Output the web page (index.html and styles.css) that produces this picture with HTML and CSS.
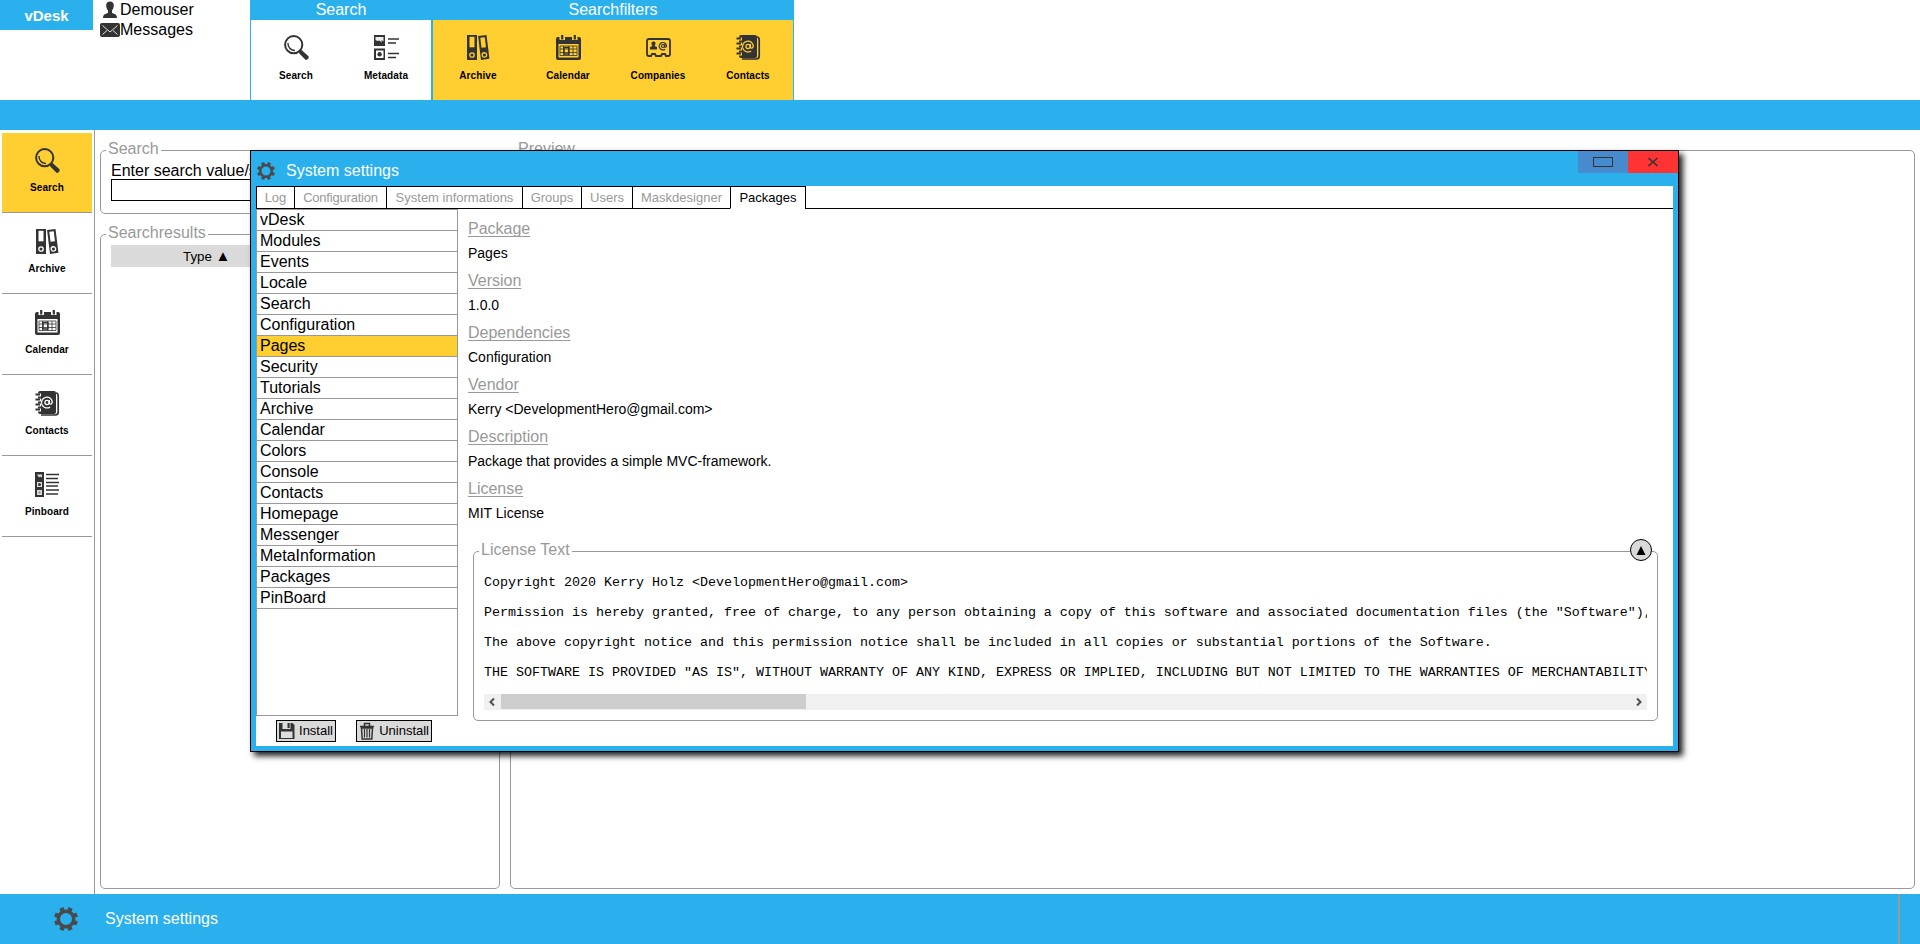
FILE: index.html
```html
<!DOCTYPE html>
<html lang="en">
<head>
<meta charset="utf-8">
<title>vDesk</title>
<link rel="stylesheet" href="styles.css">
</head>
<body>
<svg width="0" height="0" class="defs">
  <symbol id="i-search" viewBox="0 0 25 25">
    <circle cx="9.700" cy="9.700" r="8.600" fill="none" stroke="#333" stroke-width="2"/>
    <path d="M3.900 8c0 5 3.500 7.500 7 7.500" fill="none" stroke="#333" stroke-width="1.400"/>
    <path d="M14.500 16.500l2.500-2 7.500 6.700c1 1.500-1.500 4.500-3 3.500l-6-6z" fill="#333"/>
  </symbol>
  <symbol id="i-meta" viewBox="0 0 25 25">
    <path d="M0 0h11v11H0zM0 13.500h11V25H0z" fill="#333"/>
    <path d="M1.500 2h8v4.500L7.500 5v2.500l-2-2-2 .5-2-1z" fill="#eee"/>
    <path d="M2 15.500h7.500V23H2z" fill="#fff"/><circle cx="5.600" cy="19.300" r="2.200" fill="#333"/>
    <path d="M14 4h11M14 8h8M14 18.500h11M14 22.500h8" stroke="#333" stroke-width="1.700"/>
  </symbol>
  <symbol id="i-archive" viewBox="0 0 25 25">
    <path d="M1 0h10v25H1z" fill="#333"/>
    <path class="cut" d="M3.500 1.800h5v10.500h-5z"/>
    <circle class="cut-line" cx="6" cy="20" r="2.200"/>
    <g transform="rotate(-7 17.500 12.500)">
      <path d="M13.500 .5h8.500v24h-8.500z" fill="#333"/>
      <path class="cut" d="M15.500 2.500h4.500v10h-4.500z"/>
      <circle class="cut-line" cx="17.500" cy="20" r="2.200"/>
    </g>
  </symbol>
  <symbol id="i-calendar" viewBox="0 0 25 25">
    <path d="M0 4q0-2 2-2h21q2 0 2 2v19q0 2-2 2H2q-2 0-2-2z" fill="#333"/>
    <path class="cut" d="M2.500 9h20v13.500h-20zM3.500 0h5.500v5H3.500zM16 0h5.500v5H16z"/>
    <path d="M6.200 0v4.500M18.800 0v4.500" stroke="#333" stroke-width="2.200"/>
    <path d="M4 11h17v9.500H4zM4 14h17M4 17.500h17M7.500 11v9.500M12.500 11v9.500M17 11v9.500" fill="none" stroke="#333" stroke-width=".8"/>
    <path d="M8 12.500h5v6.500H8z" fill="none" stroke="#333" stroke-width="1.500"/>
  </symbol>
  <symbol id="i-company" viewBox="0 0 25 25">
    <path d="M3 4h19q2 0 2 2v13q0 2-2 2h-2l-1-2h-3l-1 2h-5l-1-2H6l-1 2H3q-2 0-2-2V6q0-2 2-2z" fill="none" stroke="#333" stroke-width="1.800"/>
    <path d="M7.500 6.500c3 0 2 3 1 4.500l2.500 1v2.500H4V12l2.500-1c-1-1.500-2-4.500 1-4.500z" fill="#333"/>
    <g fill="none" stroke="#333" stroke-width="1.200"><circle cx="17" cy="11" r="1.500"/><path d="M18.700 9v2.800q1 1.200 1.900-.8a3.700 3.700 0 1 0-1.500 3.200"/></g>
  </symbol>
  <symbol id="i-contacts" viewBox="0 0 25 25">
    <path d="M5 0h14q2 0 2 2v19q0 2-2 2H5q-2 0-2-2V2q0-2 2-2z" fill="#333"/>
    <path d="M21 2q2.200 0 2.200 3v16q0 3-3 3H6" fill="none" stroke="#333" stroke-width="1.700"/>
    <path d="M1 4h5M1 9h5M1 14h5M1 19h5" class="cut-line wide"/>
    <path d="M.5 3.500h4.500M.5 8.500h4.500M.5 13.500h4.500M.5 18.500h4.500" stroke="#333" stroke-width="1.800"/>
    <circle class="cut-line" cx="12" cy="11.500" r="2.100"/>
    <path class="cut-line" d="M14.400 9v3.600q1.700 1.600 2.900-1.100a5.400 5.400 0 1 0-2.200 4.400"/>
  </symbol>
  <symbol id="i-pin" viewBox="0 0 25 25">
    <path d="M0 0h9v25H0z" fill="#333"/><path d="M2 2.500h5v3L5 4.500 4 5.500zM2 10h5v5H2zM2 18h5v5H2z" fill="#ddd"/>
    <circle cx="4.500" cy="12.500" r="1.500" fill="#333"/><circle cx="4.500" cy="20.500" r="1.200" fill="#999"/>
    <path d="M11 2.500h13M11 6.500h12M11 10.500h13M11 14h12M11 18h13M11 22h12" stroke="#333" stroke-width="1.500"/>
  </symbol>
  <symbol id="i-gear" viewBox="0 0 24 24">
    <circle cx="12" cy="12" r="7.700" fill="none" stroke="#4a4a4a" stroke-width="3.400"/>
    <g stroke="#4a4a4a" stroke-width="4.400"><path d="M12 0v4M12 20v4M0 12h4M20 12h4" transform="rotate(22.500 12 12)"/><path d="M12 0v4M12 20v4M0 12h4M20 12h4" transform="rotate(67.500 12 12)"/></g>
  </symbol>
</svg>

<header class="top">
  <div class="brand">vDesk</div>
  <div class="user">
    <div class="user-row"><svg class="user-icon" viewBox="0 0 20 20"><path d="M10 1.500c5 0 4.500 6 2 9v2.500c2 .8 5 1 5 5H3c0-4 3-4.200 5-5v-2.500c-2.500-3-3-9 2-9z" fill="#333"/></svg>Demouser</div>
    <div class="user-row"><svg class="user-icon" viewBox="0 0 20 20"><rect y="3" width="20" height="14" rx="2" fill="#333"/><path d="M2.500 5.500L10 12l7.500-6.500M2.500 14.500L7 10.500M17.500 14.500L13 10.500" fill="none" stroke="#ddd"/></svg>Messages</div>
  </div>
  <section class="group">
    <h2 class="group-title">Search</h2>
    <div class="group-items">
      <div class="tool"><svg class="icon"><use href="#i-search"/></svg>Search</div>
      <div class="tool"><svg class="icon"><use href="#i-meta"/></svg>Metadata</div>
    </div>
  </section>
  <section class="group group-active">
    <h2 class="group-title">Searchfilters</h2>
    <div class="group-items">
      <div class="tool"><svg class="icon"><use href="#i-archive"/></svg>Archive</div>
      <div class="tool"><svg class="icon"><use href="#i-calendar"/></svg>Calendar</div>
      <div class="tool"><svg class="icon"><use href="#i-company"/></svg>Companies</div>
      <div class="tool"><svg class="icon"><use href="#i-contacts"/></svg>Contacts</div>
    </div>
  </section>
</header>
<div class="bar"></div>
<main class="main">
  <nav class="side">
    <div class="side-item selected"><svg class="icon"><use href="#i-search"/></svg>Search</div>
    <div class="side-item"><svg class="icon"><use href="#i-archive"/></svg>Archive</div>
    <div class="side-item"><svg class="icon"><use href="#i-calendar"/></svg>Calendar</div>
    <div class="side-item"><svg class="icon"><use href="#i-contacts"/></svg>Contacts</div>
    <div class="side-item"><svg class="icon"><use href="#i-pin"/></svg>Pinboard</div>
  </nav>
  <div class="left">
    <fieldset class="box search-box">
      <legend class="legend">Search</legend>
      <div class="search-label">Enter search value/s</div>
      <div class="search-input"></div>
    </fieldset>
    <fieldset class="box results-box">
      <legend class="legend">Searchresults</legend>
      <div class="results-head">Type <span class="sort">▲</span></div>
    </fieldset>
  </div>
  <fieldset class="box preview"><legend class="legend">Preview</legend></fieldset>
</main>
<footer class="task">
  <svg class="task-gear"><use href="#i-gear"/></svg>
  <span class="task-name">System settings</span>
  <span class="task-end"></span>
</footer>

<div class="window">
  <div class="win-head">
    <svg class="win-gear"><use href="#i-gear"/></svg>
    <span class="win-title">System settings</span>
    <span class="win-btn"><svg width="20" height="10"><rect x=".5" y=".5" width="19" height="9" fill="none" stroke="#333"/></svg></span>
    <span class="win-btn win-close"><svg width="12" height="10"><path d="M1.500 1l9 8M10.500 1l-9 8" stroke="#333" stroke-width="1.600"/></svg></span>
  </div>
  <div class="win-body">
    <div class="tabs">
      <span class="tab t-log">Log</span><span class="tab t-conf">Configuration</span><span class="tab t-sys">System informations</span><span class="tab t-grp">Groups</span><span class="tab t-usr">Users</span><span class="tab t-mask">Maskdesigner</span><span class="tab t-pkg">Packages</span><span class="tab-rest"></span>
    </div>
    <div class="content">
      <div class="packages">
        <div class="list">
          <div class="row">vDesk</div><div class="row">Modules</div><div class="row">Events</div><div class="row">Locale</div><div class="row">Search</div><div class="row">Configuration</div><div class="row row-on">Pages</div><div class="row">Security</div><div class="row">Tutorials</div><div class="row">Archive</div><div class="row">Calendar</div><div class="row">Colors</div><div class="row">Console</div><div class="row">Contacts</div><div class="row">Homepage</div><div class="row">Messenger</div><div class="row">MetaInformation</div><div class="row">Packages</div><div class="row">PinBoard</div>
        </div>
        <div class="actions">
          <div class="btn install"><svg width="18" height="18" viewBox="0 0 18 18"><path d="M1 1h13.500l2 2v14H1z" fill="#333"/><path d="M4.500 1h8v6h-8z" fill="#ddd"/><path d="M9.500 1h2.200v5H9.500z" fill="#333"/><path d="M3 9.500h11.500v6.500H3z" fill="#ddd"/></svg>Install</div>
          <div class="btn uninstall"><svg width="18" height="18" viewBox="0 0 18 18"><path d="M2 4.500h14M6.500 4V1.500h5V4M3.500 6l.7 11h9.600l.7-11z" fill="none" stroke="#333" stroke-width="1.500"/><path d="M6.500 7v8.500M9 7v8.500M11.500 7v8.500" stroke="#333" stroke-width="1.200"/></svg>Uninstall</div>
        </div>
      </div>
      <div class="details">
        <div class="key">Package</div><div class="val">Pages</div>
        <div class="key">Version</div><div class="val">1.0.0</div>
        <div class="key">Dependencies</div><div class="val">Configuration</div>
        <div class="key">Vendor</div><div class="val">Kerry &lt;DevelopmentHero@gmail.com&gt;</div>
        <div class="key">Description</div><div class="val">Package that provides a simple MVC-framework.</div>
        <div class="key">License</div><div class="val">MIT License</div>
        <fieldset class="box license">
          <legend class="legend">License Text</legend>
          <span class="toggle"><svg width="10" height="9"><path d="M5 0l4.500 9h-9z"/></svg></span>
          <pre class="text">Copyright 2020 Kerry Holz &lt;DevelopmentHero@gmail.com&gt;

Permission is hereby granted, free of charge, to any person obtaining a copy of this software and associated documentation files (the "Software"),

The above copyright notice and this permission notice shall be included in all copies or substantial portions of the Software.

THE SOFTWARE IS PROVIDED "AS IS", WITHOUT WARRANTY OF ANY KIND, EXPRESS OR IMPLIED, INCLUDING BUT NOT LIMITED TO THE WARRANTIES OF MERCHANTABILITY</pre>
          <div class="scroll"><svg class="arrow" viewBox="0 0 17 16"><path d="M10 4.500L6.500 8l3.500 3.500" fill="none" stroke="#505050" stroke-width="2"/></svg><span class="thumb"></span><svg class="arrow arrow-r" viewBox="0 0 17 16"><path d="M7 4.500L10.500 8 7 11.500" fill="none" stroke="#505050" stroke-width="2"/></svg></div>
        </fieldset>
      </div>
    </div>
  </div>
</div>
</body>
</html>
```
FILE: styles.css
```css
* { box-sizing: border-box; }
body { --cut: #fff; margin: 0; height: 944px; overflow: hidden; display: flex; flex-direction: column; background: #fff; color: #000; font: 16px/20px "Liberation Sans", Arial, sans-serif; }
.defs { position: absolute; }
.icon { display: block; width: 25px; height: 25px; }
.cut { fill: var(--cut); }
.cut-line { fill: none; stroke: var(--cut); stroke-width: 1.3px; }
.wide { stroke-width: 3px; }

.top { display: flex; height: 100px; }
.brand { width: 93px; height: 30px; padding-top: 1px; background: #2ab0ed; color: #fff; font-weight: bold; font-size: 15px; line-height: 29px; text-align: center; }
.user { width: 157px; padding-left: 7px; }
.user-row { display: flex; height: 20px; line-height: 19px; }
.user-icon { width: 20px; height: 20px; }
.group { width: 182px; border: solid #2ab0ed; border-width: 0 1px; }
.group-active { --cut: #ffce30; width: 362px; }
.group-title { margin: 0; height: 20px; background: #2ab0ed; color: #fff; font-size: 16px; font-weight: normal; line-height: 19px; text-align: center; }
.group-items { display: flex; height: 80px; }
.group-active .group-items { background: #ffce30; }
.tool, .side-item { display: flex; flex-direction: column; align-items: center; gap: 10px; width: 90px; padding-top: 15px; font-size: 10px; font-weight: bold; line-height: 12px; letter-spacing: .1px; }
.bar { height: 30px; background: #2ab0ed; }

.main { display: flex; height: 764px; }
.side { display: flex; flex-direction: column; gap: 1px; width: 95px; padding: 3px 0 0 2px; border-right: 1px solid #999; }
.side-item { gap: 9px; height: 80px; border-bottom: 1px solid #999; }
.side-item.selected { background: #ffce30; }
.left { width: 400px; margin: 11px 0 0 5px; }
.box { min-width: 0; margin: 0; padding: 1px 10px 0; border: 1px solid #999; border-radius: 5px; }
.legend { height: 19px; padding: 0 2px; margin-left: -5px; color: #999; line-height: 16px; }
.search-box { height: 73px; }
.search-label { height: 18px; line-height: 20px; }
.search-input { height: 22px; border: 1px solid #000; }
.results-box { height: 664px; margin-top: 11px; }
.results-head { height: 22px; padding-left: 72px; background: #dadada; font-size: 13.33px; line-height: 24px; }
.sort { font-size: 15px; line-height: 20px; }
.preview { width: 1405px; height: 748px; margin: 11px 0 0 10px; }

.task { display: flex; align-items: center; height: 50px; padding-left: 54px; background: #2ab0ed; color: #fff; }
.task-gear { width: 24px; height: 24px; margin-right: 27px; }
.task-name { flex: 1; }
.task-end { width: 22px; height: 50px; border-left: 2px solid #999; }

.window { position: absolute; left: 250px; top: 150px; width: 1429px; height: 602px; border: 1px solid #000; background: #2ab0ed; box-shadow: 4px 4px 6px rgba(0, 0, 0, .88); }
.win-head { display: flex; height: 35px; padding-left: 6px; color: #fff; }
.win-gear { width: 18px; height: 18px; margin-top: 11px; }
.win-title { flex: 1; padding: 10px 0 0 11px; }
.win-btn { display: flex; align-items: center; justify-content: center; width: 50px; height: 22px; background: #478bce; }
.win-close { background: #f33; }
.win-body { margin: 0 5px; height: 560px; background: #fff; }
.tabs { display: flex; height: 23px; }
.tab { border: 1px solid #000; border-right: 0; color: #999; font-size: 13px; line-height: 22px; text-align: center; white-space: nowrap; }
.t-log { width: 38px; }
.t-conf { width: 92px; letter-spacing: -.2px; }
.t-sys { width: 136px; }
.t-grp { width: 59px; }
.t-usr { width: 51px; }
.t-mask { width: 98px; }
.t-pkg { width: 75px; color: #000; border-bottom-color: #fff; }
.tab-rest { flex: 1; border: solid #000; border-width: 0 0 1px 1px; }
.content { display: flex; height: 537px; }
.packages { width: 202px; }
.list { height: 507px; border: 1px solid #999; }
.row { height: 21px; padding-left: 3px; border-bottom: 1px solid #999; line-height: 20px; }
.row-on { background: #ffce30; }
.actions { display: flex; gap: 20px; padding: 4px 0 0 20px; }
.btn { display: flex; align-items: center; justify-content: space-between; height: 22px; padding: 0 2px; border: 1px solid #000; background: #dadada; font-size: 13px; line-height: 22px; white-space: nowrap; }
.btn svg { margin-left: -1px; }
.install { width: 60px; }
.uninstall { width: 76px; }
.details { flex: 1; min-width: 0; padding: 10px 0 0 10px; }
.key { height: 26px; color: #999; line-height: 20px; text-decoration: underline 1px; text-underline-offset: 2px; text-decoration-skip-ink: none; }
.val { height: 26px; font-size: 14px; line-height: 16px; }
.license { position: relative; width: 1185px; height: 179px; margin: 11px 0 0 5px; }
.toggle { position: absolute; right: 5px; top: -22px; display: flex; align-items: center; justify-content: center; width: 22px; height: 22px; border: 1px solid #000; border-radius: 50%; background: #dadada; }
.text { height: 119px; margin: 13px 0 0; overflow: hidden; font: 13.333px/15px "Liberation Mono", monospace; }
.scroll { display: flex; height: 16px; background: #f0f0f0; }
.arrow { width: 17px; height: 16px; }
.arrow-r { margin-left: auto; }
.thumb { width: 305px; height: 15px; background: #cdcdcd; }
```
